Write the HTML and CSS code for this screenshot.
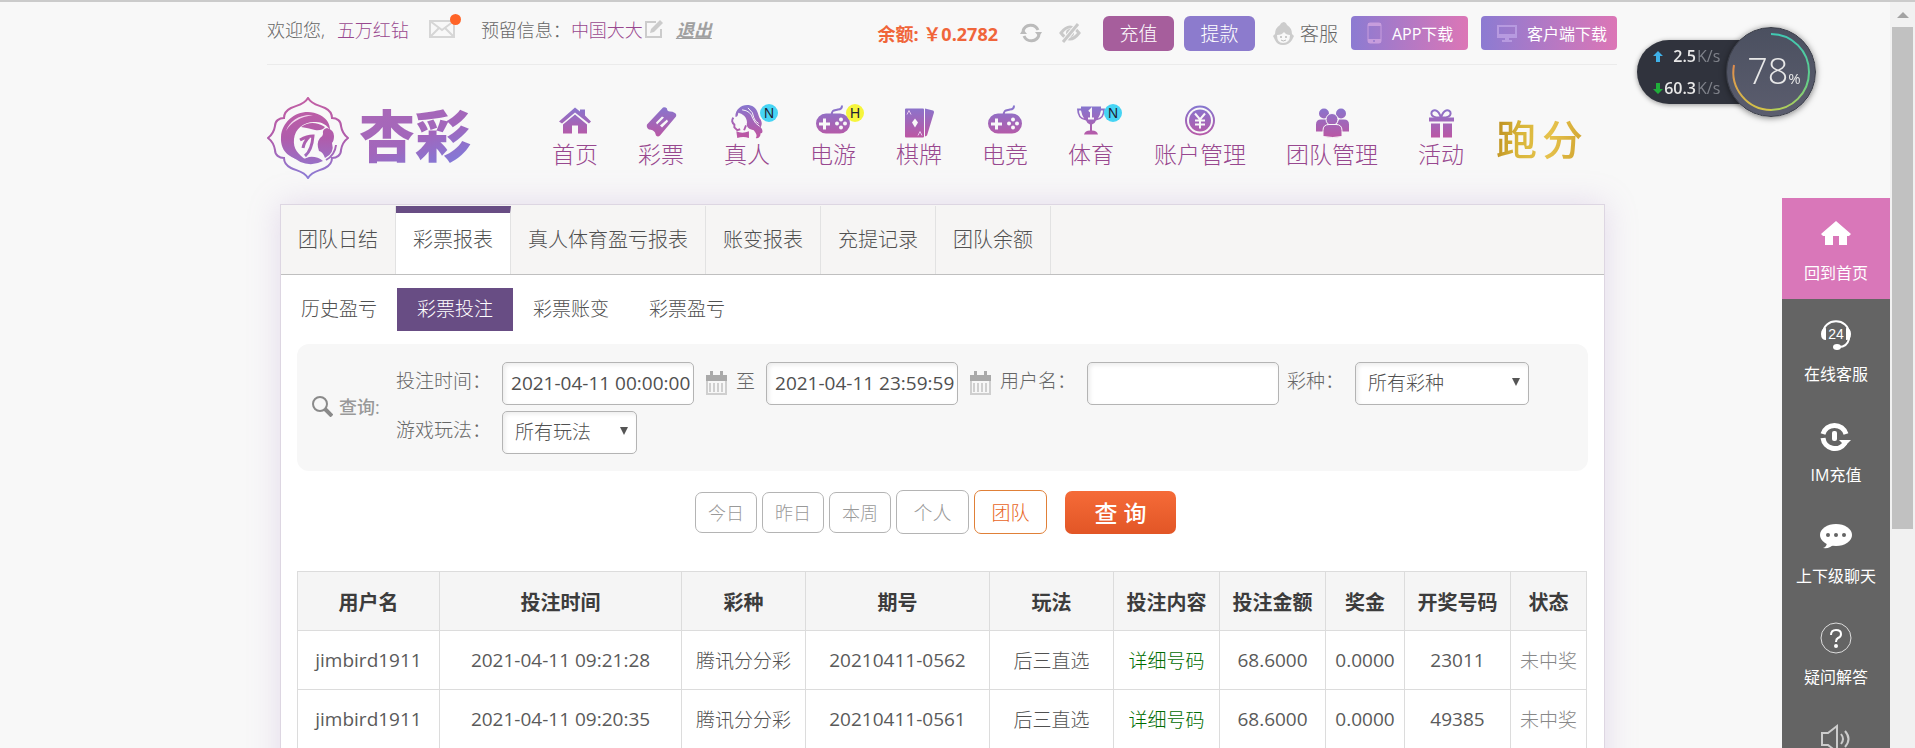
FILE: index.html
```html
<!DOCTYPE html>
<html lang="zh-CN">

<head>
    <meta charset="UTF-8">
    <meta name="viewport" content="width=device-width, initial-scale=1.0">
    <title>杏彩</title>
    <link rel="stylesheet" href="styles.css">
</head>

<body>
    <svg class="defs" width="0" height="0" aria-hidden="true">
        <defs>
            <linearGradient id="purple" gradientUnits="userSpaceOnUse" x1="0" y1="0" x2="0" y2="32">
                <stop offset="0" stop-color="#8577d0" />
                <stop offset="1" stop-color="#bb57a4" />
            </linearGradient>
            <linearGradient id="logo" gradientUnits="userSpaceOnUse" x1="0" y1="0" x2="0" y2="82">
                <stop offset="0" stop-color="#c25fa4" />
                <stop offset="0.5" stop-color="#b05cab" />
                <stop offset="1" stop-color="#8b7cd6" />
            </linearGradient>
            <linearGradient id="ring" gradientUnits="userSpaceOnUse" x1="45" y1="0" x2="45" y2="90">
                <stop offset="0" stop-color="#3cc7b8" />
                <stop offset="0.6" stop-color="#62cf8a" />
                <stop offset="1" stop-color="#c9cf4a" />
            </linearGradient>
            <linearGradient id="ring-end" gradientUnits="userSpaceOnUse" x1="0" y1="30" x2="0" y2="84">
                <stop offset="0" stop-color="#e2824f" />
                <stop offset="1" stop-color="#d3c548" />
            </linearGradient>
            <g id="gamepad">
                <path d="M16 10C15 4 19 5 22 4c3 0 4-1 4-4" fill="none" stroke="url(#purple)" stroke-width="2" />
                <path fill="url(#purple)" fill-rule="evenodd" d="M10 8h14a10 10 0 0 1 0 20H10A10 10 0 0 1 10 8zM7 13v4H3v3h4v4h3v-4h4v-3h-4v-4z" />
                <g fill="#f8f8f8">
                    <circle cx="25" cy="14" r="2" />
                    <circle cx="25" cy="22" r="2" />
                    <circle cx="21" cy="18" r="2" />
                    <circle cx="29" cy="18" r="2" />
                </g>
            </g>
            <g id="calendar">
                <path d="M0 4h21v6H0z" fill="#a9a9a9" />
                <path d="M4 0h3v5H4zM14 0h3v5h-3z" fill="#a9a9a9" />
                <path d="M1 10v13h19V10M4 12v9M8 12v9M12 12v9M16 12v9" fill="none" stroke="#cfcfcf" stroke-width="2" />
            </g>
        </defs>
    </svg>

    <div class="page">
        <header class="topbar">
            <div class="account">
                <span>欢迎您,</span>
                <a class="user" href="#">五万红钻</a>
                <a class="mail" href="#" aria-label="消息">
                    <svg width="26" height="18" viewBox="0 0 26 18"><path d="M1 1h24v16H1zM1 1l12 9 12-9M1 17l9-9M25 17l-9-9" fill="none" stroke="#d6d6d6" stroke-width="2" /></svg>
                    <i class="dot"></i>
                </a>
                <span>预留信息：</span>
                <a class="reserved" href="#">中国大大</a>
                <svg class="edit" width="19" height="18" viewBox="0 0 19 18"><path d="M11 2H1v15h15V9" fill="none" stroke="#ccc" stroke-width="2" /><path d="M5 13l1-4 9-9 3 3-9 9z" fill="#ccc" /></svg>
                <a class="logout" href="#">退出</a>
            </div>

            <span class="balance">余额: ￥0.2782</span>
            <svg class="refresh" width="22" height="20" viewBox="0 0 22 20"><path d="M3 8a8 8 0 0 1 15-1M19 12a8 8 0 0 1-15 1" fill="none" stroke="#bbb" stroke-width="3" /><path d="M0 11l3-5 4 5zM15 9h7l-3 5z" fill="#bbb" /></svg>
            <svg class="eye" width="22" height="20" viewBox="0 0 22 20"><path d="M2 10q9-12 18 0-9 12-18 0z" fill="none" stroke="#c9c9c9" stroke-width="3" /><circle cx="11" cy="10" r="4" fill="#c9c9c9" /><path d="M4 19L19 1" stroke="#f8f8f8" stroke-width="5" /><path d="M4 19L19 1" stroke="#c9c9c9" stroke-width="3" /></svg>
            <button class="btn recharge" type="button">充值</button>
            <button class="btn withdraw" type="button">提款</button>
            <a class="service" href="#">
                <svg width="21" height="23" viewBox="0 0 21 23"><path fill="#ccc" fill-rule="evenodd" d="M10 0q3 0 4 3 5 3 5 9l2 2-2 4q-3 5-9 5t-8-5l-2-4 2-2q0-6 5-9 1-3 5-3zM4 13q0 8 6 8 7 0 7-8-4 0-6-3-2 3-7 3z" /><circle cx="8" cy="15" r="1" fill="#bbb" /><circle cx="13" cy="15" r="1" fill="#bbb" /><path d="M8 18q2 2 5 0" stroke="#bbb" fill="none" /></svg>
                客服
            </a>
            <a class="download" href="#">
                <svg width="15" height="22" viewBox="0 0 15 22"><rect x="1" y="1" width="13" height="20" rx="2" fill="none" stroke="#c79ddd" stroke-width="1" /><path d="M1 17h13v3q0 1-1 1H2q-1 0-1-1zM1 1h13v3H1z" fill="#c79ddd" /><circle cx="7" cy="19" r="1" fill="#9479cc" /></svg>
                APP下载
            </a>
            <a class="download" href="#">
                <svg width="20" height="17" viewBox="0 0 20 17"><path d="M1 1h18v11H1zM1 10h18" fill="none" stroke="#b79ae0" stroke-width="2" /><path d="M8 12h4v3h3v2H5v-2h3z" fill="#b79ae0" /></svg>
                客户端下载
            </a>
        </header>

        <div class="head">
            <a class="logo" href="#">
                <svg width="82" height="82" viewBox="0 0 82 82">
                    <path d="M41 1C45 8 52 8 58 11 62 13 65 16 65 21 70 21 74 24 74 29 75 35 77 38 81 41 77 44 75 47 74 53 74 58 70 61 65 61 65 66 62 69 58 71 52 74 45 74 41 81 37 74 30 74 24 71 20 69 17 66 17 61 12 61 8 58 8 53 7 47 5 44 1 41 5 38 7 35 8 29 8 24 12 21 17 21 17 16 20 13 24 11 30 8 37 8 41 1z" fill="none" stroke="url(#logo)" stroke-width="2" />
                    <path d="M53 18C36 9 15 21 14 40 13 56 25 63 39 63 31 57 26 52 27 42 28 31 38 24 49 25 55 25 60 28 63 33 63 26 59 21 53 18z" fill="url(#logo)" />
                    <path d="M19 34C22 24 33 17 46 18 33 20 24 25 19 34z" fill="#f3d9ee" />
                    <path d="M34 30q11-8 24 0-3 4-10 3-7-2-14-3z" fill="url(#logo)" />
                    <path d="M33 43q7-4 13-4-1 14-8 20M42 40q-5 5-6 11" fill="none" stroke="url(#logo)" stroke-width="3" />
                    <path d="M56 37q-1-5 4-6 7 2 7 8 0 5-2 7 3 10-7 15-2-6-6-7-3-8 1-13 3-2 3-4z" fill="url(#logo)" />
                    <path d="M22 57q10 8 20 3 8-1 14 4-17 9-34-7z" fill="url(#logo)" />
                    <path d="M69 48q-1 10-10 15" fill="none" stroke="url(#logo)" stroke-width="2" />
                </svg>
                <span class="brand">杏彩</span>
            </a>
            <nav class="nav">
                <a href="#">
                    <svg width="34" height="32" viewBox="0 0 34 32"><path fill="url(#purple)" d="M17 2l5 4V4h5v6l6 6-2 2L17 7 4 18l-3-2z" /><path fill="url(#purple)" d="M17 9l12 10v9h-9v-8h-6v8H5v-9z" /></svg>
                    首页
                </a>
                <a href="#">
                    <svg width="34" height="32" viewBox="0 0 34 32"><path fill="url(#purple)" fill-rule="evenodd" d="M19 2q2-1 4 1 0 3 3 3 3 0 4 1 3 1 2 4L16 30q-2 2-4 0l-1-3q-2-3-6-3-3-2-2-5zM12 17l6-6 2 1-7 7zM16 20l7-6 1 2-6 6z" /></svg>
                    彩票
                </a>
                <a href="#">
                    <svg width="34" height="36" viewBox="0 0 34 36"><path fill="url(#purple)" d="M5 13C5 3 16-2 24 3c5 4 4 9 7 13 2 4 1 6 0 8 3 3 2 7 0 6 0 4-3 6-5 5 2-3 0-5-2-8-6-1-8-4-7-8C17 13 12 10 8 9c0 2-1 5-3 4z" /><path d="M12 6q9 1 11 9 2 5 7 8M18 4q6 5 6 10 1 4 5 6" fill="none" stroke="#f8f8f8" /><path d="M3 14q-3 4 1 7v3l3 3 3-1M16 22l-2 5" fill="none" stroke="url(#purple)" stroke-width="2" /><path fill="url(#purple)" d="M6 28q6 3 13 0v7q-6-2-12 0z" /></svg>
                    真人
                    <i class="badge new">N</i>
                </a>
                <a href="#">
                    <svg width="34" height="32" viewBox="0 0 34 32"><use href="#gamepad" /></svg>
                    电游
                    <i class="badge hot">H</i>
                </a>
                <a href="#">
                    <svg width="34" height="34" viewBox="0 0 34 34"><path fill="url(#purple)" fill-rule="evenodd" d="M4 4h17q1 0 1 1v27q0 1-1 1H4q-1 0-1-1V5q0-1 1-1zM13 14l3 4-3 5-3-5z" /><path fill="url(#purple)" d="M23 4l8 2q1 0 1 2l-7 23-2 1z" /><path d="M5 10l2-4 2 4M16 31l2-4 2 4" fill="none" stroke="#e7c8ed" /></svg>
                    棋牌
                </a>
                <a href="#">
                    <svg width="34" height="32" viewBox="0 0 34 32"><use href="#gamepad" /></svg>
                    电竞
                </a>
                <a href="#">
                    <svg width="34" height="32" viewBox="0 0 34 32"><path fill="url(#purple)" d="M7 1h20v2h4q0 11-9 12-1 3-4 4v6q5 0 6 4H10q1-4 6-4v-6q-3-1-4-4Q3 14 3 3h4zM7 5H5q0 6 5 8-2-3-3-8zM27 5q-1 5-3 8 5-2 5-8z" fill-rule="evenodd" /><path d="M15 6l2-2v9M14 13h6" fill="none" stroke="#f8f8f8" stroke-width="2" /></svg>
                    体育
                    <i class="badge new">N</i>
                </a>
                <a href="#">
                    <svg width="34" height="32" viewBox="0 0 34 32"><circle cx="17" cy="15" r="14" fill="none" stroke="url(#purple)" stroke-width="2" /><circle cx="17" cy="15" r="11" fill="url(#purple)" /><path d="M12 8l5 6 5-6M12 15h10M12 19h10M17 14v9" fill="none" stroke="#f8f8f8" stroke-width="2" /></svg>
                    账户管理
                </a>
                <a href="#">
                    <svg width="34" height="32" viewBox="0 0 34 32"><g fill="url(#purple)"><circle cx="9" cy="8" r="5" /><circle cx="26" cy="8" r="5" /><path d="M1 26v-7q0-5 5-5h5l2 4-4 8zM34 26v-7q0-5-5-5h-5l-2 4 4 8z" /></g><g fill="url(#purple)" stroke="#f8f8f8"><circle cx="17" cy="14" r="6" /><path d="M8 31v-6q0-6 6-6h7q6 0 6 6v6q-9 2-19 0z" /></g></svg>
                    团队管理
                </a>
                <a href="#">
                    <svg width="34" height="32" viewBox="0 0 34 32"><path d="M17 12C3 13 7 3 12 5c3 1 4 4 5 7 1-3 2-6 5-7 5-2 9 8-5 7z" fill="none" stroke="url(#purple)" stroke-width="2" /><path fill="url(#purple)" d="M5 12h25v4H5zM7 18h9v14H7zM19 18h9v14h-9z" /></svg>
                    活动
                </a>
            </nav>
            <a class="paofen" href="#"><span>跑</span><span>分</span></a>
        </div>

        <main class="panel">
            <nav class="tabs">
                <a href="#">团队日结</a>
                <a class="active" href="#">彩票报表</a>
                <a href="#">真人体育盈亏报表</a>
                <a href="#">账变报表</a>
                <a href="#">充提记录</a>
                <a href="#">团队余额</a>
            </nav>
            <nav class="subtabs">
                <a href="#">历史盈亏</a>
                <a class="active" href="#">彩票投注</a>
                <a href="#">彩票账变</a>
                <a href="#">彩票盈亏</a>
            </nav>

            <form class="search">
                <div class="filters">
                    <div class="filter-title">
                        <svg width="22" height="22" viewBox="0 0 22 22"><circle cx="9" cy="9" r="7" fill="none" stroke="#8a8a8a" stroke-width="2" /><path d="M14 14l7 7" stroke="#8a8a8a" stroke-width="4" /></svg>
                        查询:
                    </div>
                    <div class="fields">
                        <div class="row">
                            <label for="start">投注时间：</label>
                            <input id="start" type="text" value="2021-04-11 00:00:00">
                            <svg class="cal" width="21" height="24" viewBox="0 0 21 24"><use href="#calendar" /></svg>
                            <label for="end">至</label>
                            <input id="end" type="text" value="2021-04-11 23:59:59">
                            <svg class="cal" width="21" height="24" viewBox="0 0 21 24"><use href="#calendar" /></svg>
                            <label for="username">用户名：</label>
                            <input class="name" id="username" type="text">
                            <label for="lottery">彩种：</label>
                            <span class="select wide"><select id="lottery"><option>所有彩种</option></select></span>
                        </div>
                        <div class="row">
                            <label for="play">游戏玩法：</label>
                            <span class="select"><select id="play"><option>所有玩法</option></select></span>
                        </div>
                    </div>
                </div>
                <div class="actions">
                    <button class="day" type="button">今日</button>
                    <button class="day" type="button">昨日</button>
                    <button class="day" type="button">本周</button>
                    <button class="scope" type="button">个人</button>
                    <button class="scope on" type="button">团队</button>
                    <button class="submit" type="button">查 询</button>
                </div>
            </form>

            <table class="records">
                <colgroup>
                    <col class="c-user"><col class="c-time"><col class="c-type"><col class="c-issue"><col class="c-type">
                    <col class="c-mid"><col class="c-mid"><col class="c-prize"><col class="c-mid"><col class="c-state">
                </colgroup>
                <thead>
                    <tr>
                        <th>用户名</th>
                        <th>投注时间</th>
                        <th>彩种</th>
                        <th>期号</th>
                        <th>玩法</th>
                        <th>投注内容</th>
                        <th>投注金额</th>
                        <th>奖金</th>
                        <th>开奖号码</th>
                        <th>状态</th>
                    </tr>
                </thead>
                <tbody>
                    <tr>
                        <td class="num">jimbird1911</td>
                        <td class="num">2021-04-11 09:21:28</td>
                        <td>腾讯分分彩</td>
                        <td class="num">20210411-0562</td>
                        <td>后三直选</td>
                        <td><a href="#">详细号码</a></td>
                        <td class="num">68.6000</td>
                        <td class="num">0.0000</td>
                        <td class="num">23011</td>
                        <td class="lost">未中奖</td>
                    </tr>
                    <tr>
                        <td class="num">jimbird1911</td>
                        <td class="num">2021-04-11 09:20:35</td>
                        <td>腾讯分分彩</td>
                        <td class="num">20210411-0561</td>
                        <td>后三直选</td>
                        <td><a href="#">详细号码</a></td>
                        <td class="num">68.6000</td>
                        <td class="num">0.0000</td>
                        <td class="num">49385</td>
                        <td class="lost">未中奖</td>
                    </tr>
                </tbody>
            </table>
        </main>
    </div>

    <aside class="side">
        <a class="home" href="#">
            <svg width="32" height="30" viewBox="0 0 32 30"><path fill="#fff" d="M16 2l15 13-2 2h-2v9h-8v-9h-6v9H5v-9H3l-2-2z" /></svg>
            回到首页
        </a>
        <a href="#">
            <svg width="32" height="32" viewBox="0 0 32 32"><path d="M3 15C3-2 29-2 29 15v5q-2 8-10 8" fill="none" stroke="#fff" stroke-width="2" /><path fill="#fff" d="M6 9v12q-5 0-5-6t5-6zM26 9v12q5 0 5-6t-5-6z" /><ellipse cx="17" cy="28" rx="4" ry="3" fill="#fff" /><text x="16" y="20" text-anchor="middle" class="h24">24</text></svg>
            在线客服
        </a>
        <a href="#">
            <svg width="32" height="32" viewBox="0 0 32 32"><path d="M3 14a12 12 0 0 1 23 0M3 18a12 12 0 0 0 22 5" fill="none" stroke="#fff" stroke-width="5" /><rect x="12" y="11" width="5" height="10" rx="2" fill="#fff" /><path d="M19 20h12l-6 6z" fill="#fff" /></svg>
            IM充值
        </a>
        <a href="#">
            <svg width="32" height="30" viewBox="0 0 32 30"><ellipse cx="16" cy="13" rx="16" ry="11" fill="#fff" /><path d="M7 20q0 5-4 6 7 1 11-4z" fill="#fff" /><g fill="#646464"><circle cx="8" cy="13" r="2" /><circle cx="16" cy="13" r="2" /><circle cx="24" cy="13" r="2" /></g></svg>
            上下级聊天
        </a>
        <a href="#">
            <svg width="32" height="32" viewBox="0 0 32 32"><circle cx="16" cy="16" r="15" fill="none" stroke="#ddd" stroke-width="1" /><path d="M11 13q0-5 5-5t5 4q0 3-3 4-2 1-2 4" fill="none" stroke="#fff" stroke-width="2" /><circle cx="16" cy="24" r="2" fill="#fff" /></svg>
            疑问解答
        </a>
        <a href="#" aria-label="声音">
            <svg width="32" height="32" viewBox="0 0 32 32"><path d="M2 10h6l9-7v26l-9-7H2z" fill="none" stroke="#ccc" stroke-width="2" /><path d="M21 11q4 5 0 10M25 8q7 8 0 16" fill="none" stroke="#ccc" stroke-width="2" /></svg>
        </a>
    </aside>

    <div class="scrollbar"><i class="arrow"></i><i class="thumb"></i></div>

    <div class="monitor">
        <div class="speeds">
            <div><svg width="10" height="11" viewBox="0 0 10 11"><path d="M5 0l5 5H7v6H3V5H0z" fill="#3fb1e8" /></svg><b>2.5</b><span>K/s</span></div>
            <div><svg width="10" height="11" viewBox="0 0 10 11"><path d="M5 11l5-5H7V0H3v6H0z" fill="#1fae3a" /></svg><b>60.3</b><span>K/s</span></div>
        </div>
        <div class="gauge">
            <svg width="90" height="90" viewBox="0 0 90 90"><path d="M45 7a38 38 0 0 1 0 76" fill="none" stroke="url(#ring)" stroke-width="2" /><path d="M45 83A38 38 0 0 1 8 38" fill="none" stroke="url(#ring-end)" stroke-width="2" /></svg>
            <span>78</span><small>%</small>
        </div>
    </div>
</body>

</html>
```
FILE: styles.css
```css
* {
    box-sizing: border-box;
}

html,
body {
    height: 100%;
    overflow: hidden;
}

body {
    margin: 0;
    background-color: #f8f8f8;
    border-top: 2px solid #cbcbcb;
    padding-right: 31px;
    font-family: "Open Sans", "Noto Sans CJK SC", sans-serif;
    font-size: 19px;
    font-weight: 300;
    color: #505050;
}

a {
    color: inherit;
    text-decoration: none;
}

i {
    font-style: normal;
}

svg {
    flex: none;
}

button,
input,
select {
    font: inherit;
}

.defs {
    position: absolute;
}

.page {
    width: 1350px;
    max-width: 100%;
    margin: 0 auto;
}

/* top bar */
.topbar {
    display: flex;
    align-items: center;
    height: 63px;
    border-bottom: 1px solid #ebebeb;
    font-size: 18px;
    color: #666;
    white-space: nowrap;
}

.account {
    display: flex;
    align-items: center;
    padding-bottom: 8px;
}

.user {
    margin-left: 12px;
    color: #98488f;
}

.mail {
    position: relative;
    display: flex;
    margin: 0 26px 0 20px;
}

.dot {
    position: absolute;
    top: -6px;
    right: -6px;
    width: 11px;
    height: 11px;
    border-radius: 50%;
    background-color: #ff6428;
}

.reserved {
    color: #98488f;
}

.edit {
    margin: 0 12px 0 2px;
}

.logout {
    font-weight: 700;
    font-style: italic;
    text-decoration: underline;
    color: #a0a0a0;
}

.balance {
    margin-left: auto;
    font-weight: 700;
    color: #f0653a;
}

.refresh {
    margin-left: 22px;
}

.eye {
    margin: 0 22px 0 17px;
}

.btn {
    width: 71px;
    height: 35px;
    margin-right: 10px;
    padding: 0;
    border: 0;
    border-radius: 6px;
    font-size: 19px;
    color: #fff;
}

.recharge {
    background-color: #a65e9c;
}

.withdraw {
    background-color: #8c7bcd;
}

.service {
    display: flex;
    align-items: center;
    gap: 6px;
    margin-left: 8px;
    font-size: 19px;
}

.download {
    display: flex;
    align-items: center;
    gap: 10px;
    min-width: 117px;
    height: 34px;
    margin-left: 13px;
    padding: 0 10px 0 16px;
    border-radius: 4px;
    background-image: linear-gradient(90deg, #8c7bd2, #dc76b6);
    font-size: 16px;
    font-weight: 400;
    color: #fff;
}

/* logo and main menu */
.head {
    display: flex;
    align-items: flex-start;
    height: 139px;
    padding-top: 32px;
}

.logo {
    display: flex;
    align-items: center;
    gap: 10px;
    width: 243px;
}

.brand {
    background-image: linear-gradient(160deg, #a868b8 20%, #a266bb 50%, #8478d6 80%);
    -webkit-background-clip: text;
    background-clip: text;
    font-size: 56px;
    font-weight: 900;
    line-height: 76px;
    padding-bottom: 6px;
    color: transparent;
}

.nav {
    display: flex;
    padding-top: 7px;
    margin-left: 22px;
}

.nav a {
    position: relative;
    display: flex;
    flex-direction: column;
    align-items: center;
    padding: 0 20px;
    font-size: 23px;
    line-height: 30px;
    color: #98488f;
}

.nav svg {
    height: 35px;
    width: 34px;
}

.badge {
    position: absolute;
    top: 0;
    right: 12px;
    width: 18px;
    height: 18px;
    border-radius: 50%;
    font: 400 14px/18px "Liberation Sans", sans-serif;
    text-align: center;
    color: #223;
}

.new {
    background-color: #46d4f4;
}

.hot {
    background-color: #f6f53c;
}

.paofen {
    display: flex;
    gap: 5px;
    margin: 11px 0 0 12px;
    font-size: 41px;
    font-weight: 500;
    line-height: 62px;
    color: transparent;
    background-image: linear-gradient(100deg, #b98a1c, #d9b63a 30%, #e6c24c 60%, #cfa22e);
    -webkit-background-clip: text;
    background-clip: text;
}

/* report panel */
.panel {
    height: 700px;
    margin: 0 12px 0 13px;
    border: 1px solid #ddd6e2;
    background-color: #fff;
    box-shadow: 0 0 30px rgba(170, 130, 200, 0.25);
}

.tabs {
    display: flex;
    height: 70px;
    padding-top: 1px;
    border-bottom: 1px solid #bfbfbf;
    background-color: #f6f5f4;
}

.tabs a {
    padding: 0 17px;
    border-right: 1px solid #e2e2e2;
    font-size: 20px;
    line-height: 68px;
}

.tabs .active {
    border-top: 7px solid #684d84;
    background-color: #fff;
    line-height: 54px;
}

.subtabs {
    display: flex;
    padding: 13px 0;
}

.subtabs a {
    padding: 0 20px;
    line-height: 43px;
}

.subtabs .active {
    background-color: #684d84;
    color: #fff;
}

.filters {
    display: flex;
    align-items: center;
    height: 127px;
    margin: 0 16px;
    padding-left: 14px;
    border-radius: 12px;
    background-color: #f7f7f7;
    color: #666;
}

.filter-title {
    display: flex;
    align-items: center;
    gap: 6px;
    width: 85px;
    padding-bottom: 4px;
    font-size: 18px;
    font-weight: 500;
    color: #999;
}

.fields {
    display: flex;
    flex-direction: column;
    gap: 6px;
}

.row {
    display: flex;
    align-items: center;
    white-space: nowrap;
}

.row label {
    margin-right: 11px;
    line-height: 38px;
    padding-bottom: 4px;
}

.row input,
.row select {
    height: 43px;
    border: 1px solid #b4b4b4;
    border-radius: 5px;
    background-color: #fff;
    box-shadow: inset 2px 2px 4px rgba(0, 0, 0, 0.08);
    color: #505050;
}

.row input {
    width: 192px;
    padding: 0 0 0 8px;
    font-weight: 400;
}

.row .name {
    margin-right: 8px;
}

.cal {
    margin: 0 9px 0 12px;
}

.select {
    position: relative;
    display: flex;
    width: 135px;
}

.wide {
    width: 174px;
}

.select select {
    width: 100%;
    padding: 0 12px;
    appearance: none;
}

.select::after {
    content: "";
    position: absolute;
    top: 16px;
    right: 9px;
    border: 4px solid transparent;
    border-top: 8px solid #555;
    border-bottom: 0;
    pointer-events: none;
}

.actions {
    display: flex;
    justify-content: center;
    align-items: center;
    gap: 5px;
    margin: 19px 0 37px;
    padding-right: 14px;
}

.actions button {
    padding: 0;
    border: 1px solid #b4b4b4;
    border-radius: 7px;
    background-color: #fff;
    color: #999;
}

.actions .day {
    width: 62px;
    height: 41px;
    font-size: 18px;
}

.actions .scope {
    width: 73px;
    height: 44px;
}

.actions .on {
    border-color: #e08038;
    color: #e8641e;
}

.actions .submit {
    width: 111px;
    height: 43px;
    margin-left: 13px;
    border: 0;
    background-image: linear-gradient(#f56b38, #e25626);
    font-size: 23px;
    font-weight: 500;
    color: #fff;
}

/* records */
.records {
    width: calc(100% - 33px);
    margin-left: 16px;
    border-collapse: collapse;
    table-layout: fixed;
    text-align: center;
}

.records th,
.records td {
    height: 59px;
    padding: 0;
    border: 1px solid #dcdcdc;
    white-space: nowrap;
}

.records th {
    background-color: #f5f5f5;
    font-size: 20px;
    font-weight: 700;
    color: #3c3c3c;
}

.records td a {
    color: #006c00;
}

.records .num {
    font-weight: 400;
    color: #5a5a5a;
}

.records .lost {
    color: #888;
}

.c-user {
    width: 142px;
}

.c-time {
    width: 242px;
}

.c-type {
    width: 124px;
}

.c-issue {
    width: 184px;
}

.c-mid {
    width: 106px;
}

.c-prize {
    width: 79px;
}

.c-state {
    width: 76px;
}

/* floating menu on the right */
.side {
    position: fixed;
    top: 198px;
    right: 25px;
    bottom: 0;
    width: 108px;
    overflow: hidden;
    background-color: #646464;
}

.side a {
    display: flex;
    flex-direction: column;
    align-items: center;
    gap: 12px;
    height: 101px;
    padding-top: 20px;
    font-size: 16px;
    font-weight: 400;
    line-height: 22px;
    color: #fff;
}

.side svg {
    height: 32px;
}

.side .home {
    background-color: #d977b9;
}

.h24 {
    font: 400 14px "Liberation Sans", sans-serif;
    fill: #fff;
}

.scrollbar {
    position: fixed;
    top: 2px;
    right: 0;
    bottom: 0;
    width: 25px;
    padding: 0 2px;
    background-color: #f1f1f1;
}

.arrow {
    display: block;
    width: 0;
    margin: 10px auto 9px;
    border: 6px solid transparent;
    border-top: 0;
    border-bottom: 6px solid #a3a3a3;
}

.thumb {
    display: block;
    height: 502px;
    background-color: #c1c1c1;
}

/* network monitor */
.monitor {
    position: fixed;
    top: 27px;
    right: 99px;
    display: flex;
    align-items: center;
    color: #e8e8e8;
}

.speeds {
    width: 120px;
    height: 64px;
    margin-right: -31px;
    padding-left: 16px;
    border-radius: 32px 0 0 32px;
    background-color: #30333d;
    box-shadow: 0 1px 5px rgba(0, 0, 0, 0.4);
}

.speeds div {
    display: grid;
    grid-template-columns: 10px 33px auto;
    align-items: center;
    height: 32px;
    font-size: 16px;
}

.speeds b {
    font-weight: 600;
    text-align: right;
}

.speeds span {
    padding-left: 1px;
    font-weight: 400;
    color: #7f828a;
}

.gauge {
    position: relative;
    display: flex;
    align-items: baseline;
    justify-content: center;
    width: 90px;
    height: 90px;
    padding-left: 6px;
    border: 1px solid #3a3d47;
    border-radius: 50%;
    background-image: linear-gradient(#4b5060, #5b5d6e);
    box-shadow: 0 1px 6px rgba(0, 0, 0, 0.5);
    font-size: 36px;
    line-height: 86px;
}

.gauge svg {
    position: absolute;
    top: -1px;
    left: -1px;
}

.gauge small {
    font-size: 15px;
    font-weight: 400;
}
```
